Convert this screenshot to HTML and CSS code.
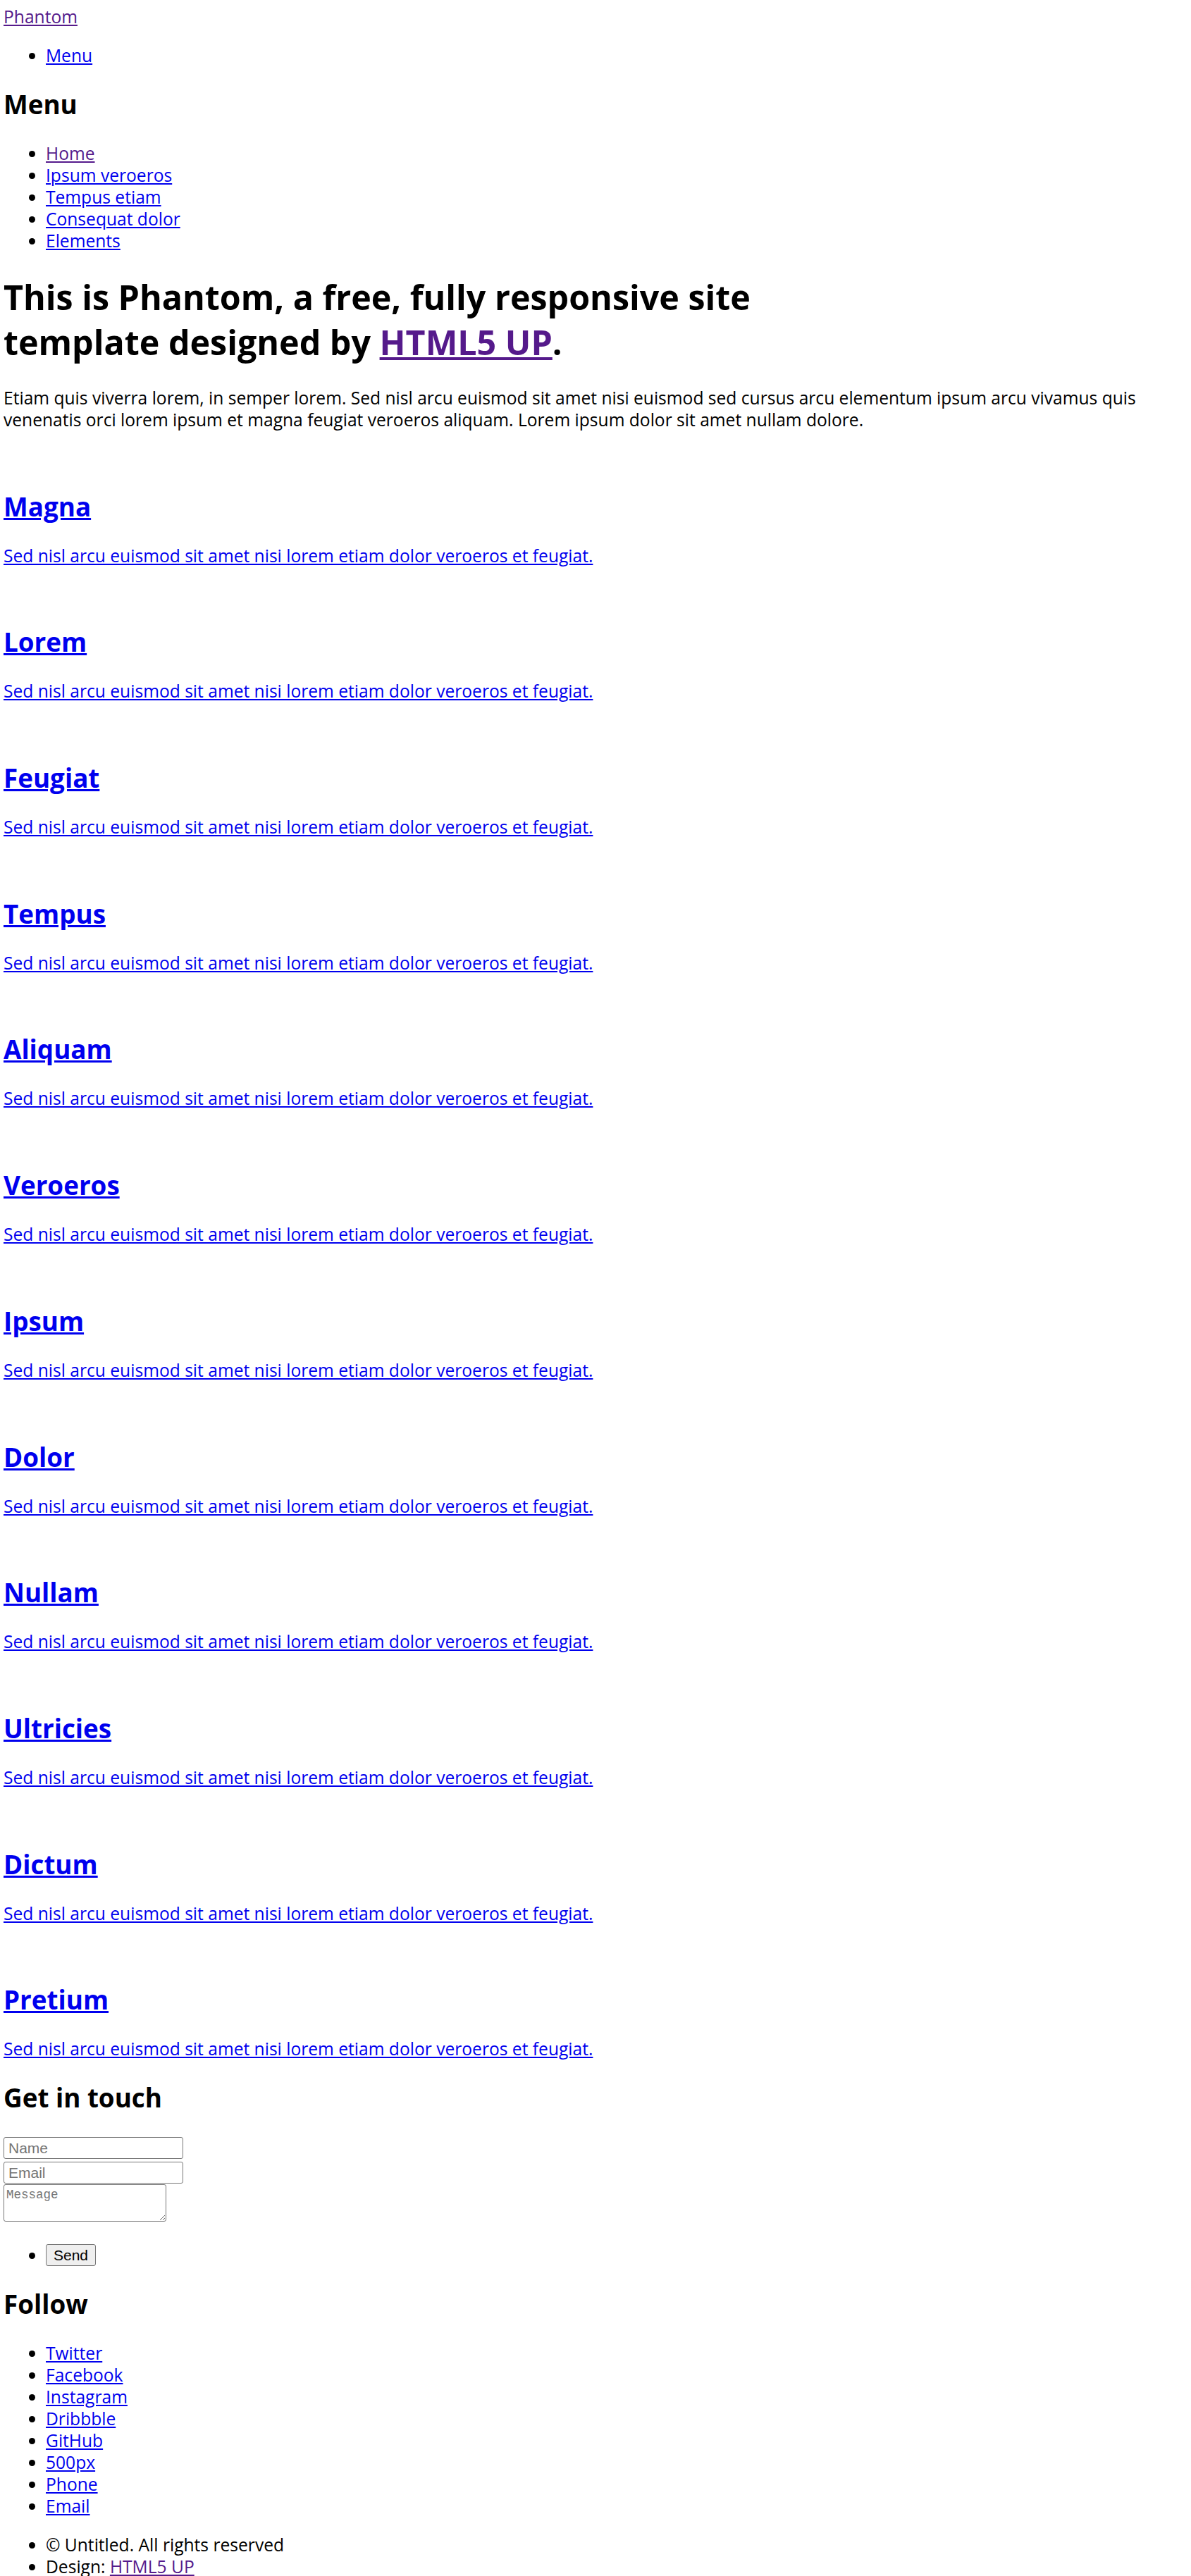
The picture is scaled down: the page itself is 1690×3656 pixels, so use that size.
FILE: index.html
```html
<!DOCTYPE html>
<html lang="en">
<head>
<meta charset="utf-8">
<title>Phantom by HTML5 UP</title>
<link rel="stylesheet" href="styles.css">
</head>
<body>
<div class="wrapper">
  <header class="site-header">
    <a href="#" class="logo visited">Phantom</a>
    <nav>
      <ul class="list">
        <li><a href="#menu">Menu</a></li>
      </ul>
    </nav>
  </header>

  <nav class="menu">
    <h2 class="h2">Menu</h2>
    <ul class="list">
      <li><a href="#" class="visited">Home</a></li>
      <li><a href="#">Ipsum veroeros</a></li>
      <li><a href="#">Tempus etiam</a></li>
      <li><a href="#">Consequat dolor</a></li>
      <li><a href="#">Elements</a></li>
    </ul>
  </nav>

  <main class="main">
    <header class="intro">
      <h1 class="h1">This is Phantom, a free, fully responsive site<br>template designed by <a href="#" class="visited">HTML5 UP</a>.</h1>
      <p class="para">Etiam quis viverra lorem, in semper lorem. Sed nisl arcu euismod sit amet nisi euismod sed cursus arcu elementum ipsum arcu vivamus quis venenatis orci lorem ipsum et magna feugiat veroeros aliquam. Lorem ipsum dolor sit amet nullam dolore.</p>
    </header>
    <section class="tiles">
      <article class="tile"><span class="image"></span><a href="#" class="tile-link"><h2 class="h2">Magna</h2><div class="content"><p class="para">Sed nisl arcu euismod sit amet nisi lorem etiam dolor veroeros et feugiat.</p></div></a></article>
      <article class="tile"><span class="image"></span><a href="#" class="tile-link"><h2 class="h2">Lorem</h2><div class="content"><p class="para">Sed nisl arcu euismod sit amet nisi lorem etiam dolor veroeros et feugiat.</p></div></a></article>
      <article class="tile"><span class="image"></span><a href="#" class="tile-link"><h2 class="h2">Feugiat</h2><div class="content"><p class="para">Sed nisl arcu euismod sit amet nisi lorem etiam dolor veroeros et feugiat.</p></div></a></article>
      <article class="tile"><span class="image"></span><a href="#" class="tile-link"><h2 class="h2">Tempus</h2><div class="content"><p class="para">Sed nisl arcu euismod sit amet nisi lorem etiam dolor veroeros et feugiat.</p></div></a></article>
      <article class="tile"><span class="image"></span><a href="#" class="tile-link"><h2 class="h2">Aliquam</h2><div class="content"><p class="para">Sed nisl arcu euismod sit amet nisi lorem etiam dolor veroeros et feugiat.</p></div></a></article>
      <article class="tile"><span class="image"></span><a href="#" class="tile-link"><h2 class="h2">Veroeros</h2><div class="content"><p class="para">Sed nisl arcu euismod sit amet nisi lorem etiam dolor veroeros et feugiat.</p></div></a></article>
      <article class="tile"><span class="image"></span><a href="#" class="tile-link"><h2 class="h2">Ipsum</h2><div class="content"><p class="para">Sed nisl arcu euismod sit amet nisi lorem etiam dolor veroeros et feugiat.</p></div></a></article>
      <article class="tile"><span class="image"></span><a href="#" class="tile-link"><h2 class="h2">Dolor</h2><div class="content"><p class="para">Sed nisl arcu euismod sit amet nisi lorem etiam dolor veroeros et feugiat.</p></div></a></article>
      <article class="tile"><span class="image"></span><a href="#" class="tile-link"><h2 class="h2">Nullam</h2><div class="content"><p class="para">Sed nisl arcu euismod sit amet nisi lorem etiam dolor veroeros et feugiat.</p></div></a></article>
      <article class="tile"><span class="image"></span><a href="#" class="tile-link"><h2 class="h2">Ultricies</h2><div class="content"><p class="para">Sed nisl arcu euismod sit amet nisi lorem etiam dolor veroeros et feugiat.</p></div></a></article>
      <article class="tile"><span class="image"></span><a href="#" class="tile-link"><h2 class="h2">Dictum</h2><div class="content"><p class="para">Sed nisl arcu euismod sit amet nisi lorem etiam dolor veroeros et feugiat.</p></div></a></article>
      <article class="tile"><span class="image"></span><a href="#" class="tile-link"><h2 class="h2">Pretium</h2><div class="content"><p class="para">Sed nisl arcu euismod sit amet nisi lorem etiam dolor veroeros et feugiat.</p></div></a></article>
    </section>
  </main>

  <footer class="footer">
    <section class="contact">
      <h2 class="h2">Get in touch</h2>
      <form class="form" action="#">
        <div class="fields">
          <input class="field-input field-name" type="text" name="name" placeholder="Name">
          <input class="field-input field-email" type="email" name="email" placeholder="Email">
          <textarea class="field-area" name="message" placeholder="Message"></textarea>
        </div>
        <ul class="list actions">
          <li><button type="submit" class="send">Send</button></li>
        </ul>
      </form>
    </section>
    <section class="follow">
      <h2 class="h2">Follow</h2>
      <ul class="list">
        <li><a href="#">Twitter</a></li>
        <li><a href="#">Facebook</a></li>
        <li><a href="#">Instagram</a></li>
        <li><a href="#">Dribbble</a></li>
        <li><a href="#">GitHub</a></li>
        <li><a href="#">500px</a></li>
        <li><a href="#">Phone</a></li>
        <li><a href="#">Email</a></li>
      </ul>
    </section>
    <ul class="list copyright">
      <li>&copy; Untitled. All rights reserved</li>
      <li>Design: <a href="#" class="visited">HTML5 UP</a></li>
    </ul>
  </footer>
</div>
</body>
</html>
```

FILE: styles.css
```css
html {
  background: #ffffff;
}

body {
  margin: 8px 5px;
  font-family: "Open Sans", "Noto Sans", sans-serif;
  font-size: 24.6px;
  line-height: 31px;
  color: #000000;
}

a {
  color: #0000ee;
  text-decoration: underline;
}

a.visited {
  color: #551a8b;
}

.list {
  margin: 24px 0;
  padding-left: 60px;
  list-style: disc;
}

.h2 {
  margin: 30px 0;
  font-size: 36.8px;
  line-height: 48px;
  font-weight: 700;
}

.h1 {
  margin: 32px 0;
  font-size: 48.4px;
  line-height: 64px;
  font-weight: 700;
}

.para {
  margin: 24px 0;
}

.image {
  display: block;
  height: 29.7px;
}

.tile-link {
  display: block;
}

.fields {
  display: flex;
  flex-direction: column;
  align-items: flex-start;
  padding-top: 2px;
}

.field-input {
  box-sizing: border-box;
  width: 255px;
  height: 31px;
  margin: 0;
  padding: 1px 6px;
  font-family: "Liberation Sans", Arial, sans-serif;
  font-size: 21px;
  border: 1px solid #767676;
  border-radius: 3px;
  background: #ffffff;
  color: #000000;
}

.field-name {
  margin-bottom: 4px;
}

.field-email {
  margin-bottom: 1px;
}

.field-area {
  box-sizing: border-box;
  width: 231px;
  height: 53px;
  margin: 0;
  padding: 3px 3px;
  font-family: "Liberation Mono", "DejaVu Sans Mono", monospace;
  font-size: 17.5px;
  line-height: 22px;
  border: 1px solid #767676;
  border-radius: 3px;
  background: #ffffff;
  resize: both;
}

.field-input::placeholder,
.field-area::placeholder {
  color: #757575;
}

.actions {
  margin-top: 32px;
}

.actions li {
  line-height: 31px;
}

.send {
  box-sizing: border-box;
  width: 71px;
  height: 31px;
  padding: 0;
  vertical-align: top;
  font-family: "Liberation Sans", Arial, sans-serif;
  font-size: 21px;
  color: #000000;
  background: #efefef;
  border: 1px solid #767676;
  border-radius: 3px;
}
```
